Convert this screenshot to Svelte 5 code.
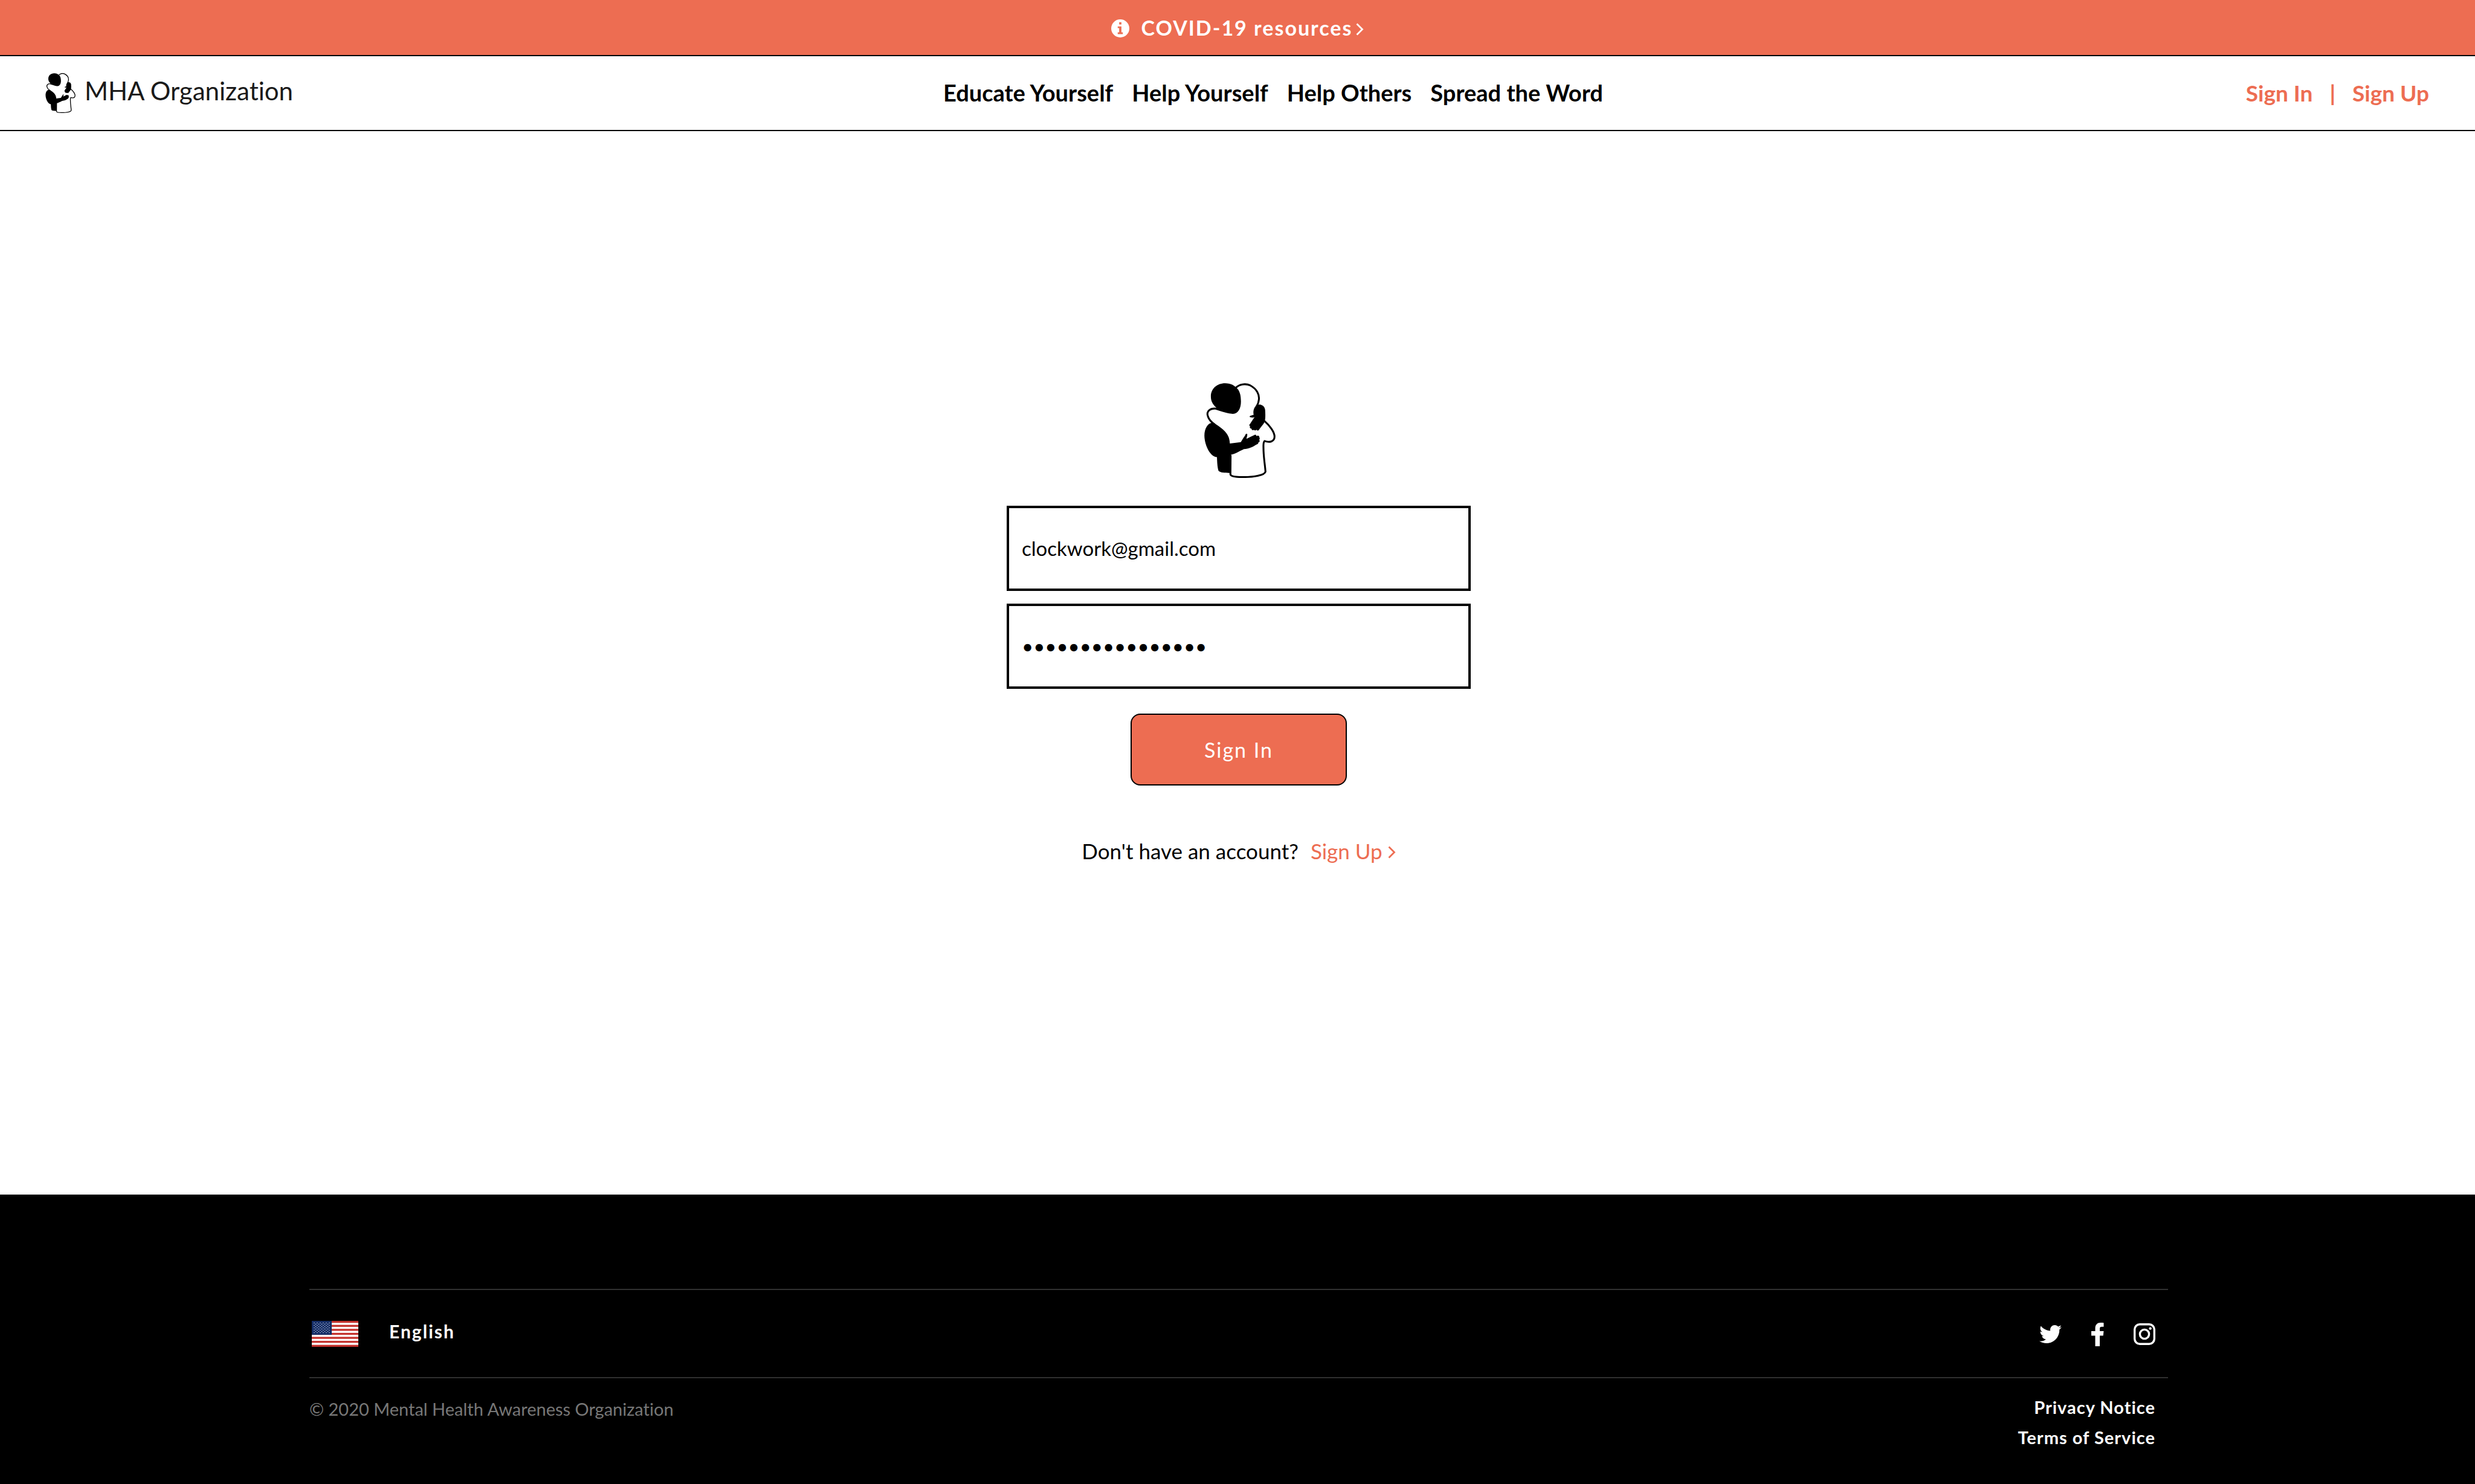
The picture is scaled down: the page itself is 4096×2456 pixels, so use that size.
<script>
  const navLinks = ['Educate Yourself', 'Help Yourself', 'Help Others', 'Spread the Word'];
  const legalLinks = ['Privacy Notice', 'Terms of Service'];
  const stripes = [0, 2, 4, 6, 8, 10, 12];
  const stars = [];
  for (let row = 0; row < 9; row++) {
    const count = row % 2 ? 5 : 6;
    for (let i = 0; i < count; i++) {
      stars.push({ x: (row % 2 ? 6.5 : 4) + i * 5, y: 3.5 + row * 2 });
    }
  }
  let email = $state('clockwork@gmail.com');
  let password = $state('mentalhealth2020');
</script>

{#snippet hug()}
  <svg class="hug" viewBox="76 60 395 514" aria-hidden="true">
    <g fill="none" stroke="currentColor" stroke-width="10" stroke-linejoin="round">
      <path d="M255 86C275 66 308 60 335 73C370 92 385 122 381 150C380 165 375 176 368 188" />
      <path d="M410 264C440 290 466 325 466 350C466 377 440 384 412 374C404 380 406 395 406 410C406 460 414 500 417 540C412 560 350 570 290 569C255 569 230 565 227 555L228 450" />
      <path d="M155 199C115 193 95 215 105 240C110 257 125 272 140 283" />
    </g>
    <g fill="currentColor">
      <path d="M150 193C128 172 121 155 121 132C121 90 155 61 198 61C225 61 243 70 257 83C277 98 284 125 284 160C284 195 270 227 240 227C220 227 180 215 148 204Z" />
      <path d="M372 178C385 172 412 178 415 205C417 235 417 255 412 270C405 285 390 300 380 315C375 320 368 316 370 311C365 320 355 316 354 313C348 318 340 313 342 307C333 308 330 298 334 294C328 292 328 285 333 282C340 270 350 255 358 245C345 248 333 247 331 242C331 236 345 235 353 232C349 215 352 190 372 178Z" />
      <path d="M125 276L138 275C170 298 206 320 218 355C222 368 223 378 224 387L283 380C290 370 298 355 306 345C308 337 314 331 318 337C320 345 314 355 314 362C330 355 345 347 358 341C364 338 369 343 366 347C374 343 385 345 383 352C388 358 385 366 383 366C388 374 384 382 378 381C380 388 374 392 368 393C350 405 325 417 300 418C275 430 250 445 229 449L228 547C200 546 175 548 162 535C155 510 155 480 154 461C120 462 87 400 86 345C86 305 105 278 125 276Z" />
    </g>
  </svg>
{/snippet}

{#snippet chevron()}
  <svg class="chevron" viewBox="0 0 13 21" aria-hidden="true">
    <path d="M1.500 1.500L10.500 10.500L1.500 19.500" fill="none" stroke="currentColor" stroke-width="2.800" />
  </svg>
{/snippet}

<div class="page">
  <a class="banner" href="#covid">
    <svg class="info" viewBox="0 0 32 32" aria-hidden="true">
      <path fill="currentColor" fill-rule="evenodd" d="M16 0a16 16 0 1 1 0 32a16 16 0 0 1 0-32zM14 5h4v4h-4zM11.500 12.500h6.500v10.500h2.500v3h-9v-3h2.500v-7.500h-2.500z" />
    </svg>
    <span class="banner-text">COVID-19 resources</span>
    {@render chevron()}
  </a>

  <header class="bar">
    <a class="brand" href="#home">
      {@render hug()}
      <span class="brand-name">MHA Organization</span>
    </a>
    <nav class="links" aria-label="Main">
      {#each navLinks as label}
        <a href="#nav">{label}</a>
      {/each}
    </nav>
    <div class="account">
      <a href="#signin">Sign In</a>
      <span>|</span>
      <a href="#signup">Sign Up</a>
    </div>
  </header>

  <main>
    {@render hug()}
    <form onsubmit={(e) => e.preventDefault()}>
      <input type="email" aria-label="Email" autocomplete="off" bind:value={email} />
      <input type="password" aria-label="Password" autocomplete="off" bind:value={password} />
      <button type="submit">Sign In</button>
    </form>
    <p class="prompt">
      <span>Don't have an account?</span>
      <a href="#signup">Sign Up {@render chevron()}</a>
    </p>
  </main>

  <footer>
    <div class="row locale-row">
      <a class="locale" href="#language">
        <svg class="flag" viewBox="0 0 77 43" preserveAspectRatio="none" aria-hidden="true">
          <rect width="77" height="43" fill="#fff" />
          {#each stripes as n}
            <rect y={(n * 43) / 13} width="77" height={43 / 13} fill="#c4322d" />
          {/each}
          <rect width="33" height={(43 * 7) / 13} fill="#142d66" />
          {#each stars as s}
            <circle cx={s.x} cy={s.y} r="0.7" fill="#d5dbe8" />
          {/each}
        </svg>
        <span class="language">English</span>
      </a>
      <div class="social">
        <a href="#twitter" aria-label="Twitter">
          <svg class="twitter" viewBox="0 48 512 416" aria-hidden="true">
            <path fill="currentColor" d="M459.37 151.716c.325 4.548.325 9.097.325 13.645 0 138.72-105.583 298.558-298.558 298.558-59.452 0-114.68-17.219-161.137-47.106 8.447.974 16.568 1.299 25.34 1.299 49.055 0 94.213-16.568 130.274-44.832-46.132-.975-84.792-31.188-98.112-72.772 6.498.974 12.995 1.624 19.818 1.624 9.421 0 18.843-1.3 27.614-3.573-48.081-9.747-84.143-51.98-84.143-102.985v-1.299c13.969 7.797 30.214 12.67 47.431 13.319-28.264-18.843-46.781-51.005-46.781-87.391 0-19.492 5.197-37.36 14.294-52.954 51.655 63.675 129.3 105.258 216.365 109.807-1.624-7.797-2.599-15.918-2.599-24.04 0-57.828 46.782-104.934 104.934-104.934 30.213 0 57.502 12.67 76.67 33.137 23.715-4.548 46.456-13.32 66.599-25.34-7.798 24.366-24.366 44.833-46.132 57.827 21.117-2.273 41.584-8.122 60.426-16.243-14.292 20.791-32.161 39.308-52.628 54.253z" />
          </svg>
        </a>
        <a href="#facebook" aria-label="Facebook">
          <svg class="facebook" viewBox="0 0 21 39" aria-hidden="true">
            <path fill="currentColor" d="M20.500.200V6.800H17.500C14.900 6.800 14 7.900 14 10V14H20.500L19.700 21.500H14V39H6.500V21.500H0V14H6.500V9.200C6.500 3.300 10.100 0 15.500 0C17.900 0 19.800.100 20.500.200Z" />
          </svg>
        </a>
        <a href="#instagram" aria-label="Instagram">
          <svg class="instagram" viewBox="0 0 36 36" aria-hidden="true">
            <rect x="1.700" y="1.700" width="32.600" height="32.600" rx="8.500" fill="none" stroke="currentColor" stroke-width="3.400" />
            <circle cx="18" cy="18" r="7.600" fill="none" stroke="currentColor" stroke-width="3.400" />
            <circle cx="27.600" cy="8.600" r="2.200" fill="currentColor" />
          </svg>
        </a>
      </div>
    </div>
    <div class="row legal-row">
      <p class="copyright">© 2020 Mental Health Awareness Organization</p>
      <div class="legal">
        {#each legalLinks as label}
          <a href="#legal">{label}</a>
        {/each}
      </div>
    </div>
  </footer>
</div>

<style>
  :global(body) {
    margin: 0;
    background: #fff;
  }
  .page {
    --accent: #ed6d52;
    min-height: 100vh;
    display: flex;
    flex-direction: column;
    font-family: Lato, "Liberation Sans", sans-serif;
    font-variant-ligatures: none;
    color: #000;
  }
  a {
    color: inherit;
    text-decoration: none;
  }
  p {
    margin: 0;
  }
  svg {
    display: block;
    flex: none;
  }
  .chevron {
    width: 13px;
    height: 21px;
    margin-top: 5px;
  }

  .banner {
    display: flex;
    align-items: center;
    justify-content: center;
    height: 91px;
    border-bottom: 2px solid #000;
    background: var(--accent);
    color: #fff;
    font-size: 34px;
    font-weight: 700;
    letter-spacing: 2px;
  }
  .info {
    width: 30px;
    height: 30px;
    margin-top: 3px;
  }
  .banner-text {
    padding: 0 6px 0 20px;
  }

  .bar {
    display: flex;
    align-items: center;
    justify-content: space-between;
    height: 122px;
    padding: 0 76px 0 74px;
    border-bottom: 2px solid #000;
  }
  .brand {
    display: flex;
    align-items: center;
    gap: 15px;
    padding-right: 12px;
    color: #1a1a1a;
    font-size: 42px;
  }
  .brand .hug {
    width: 51px;
    height: 66px;
    color: #000;
  }
  .brand-name {
    padding-bottom: 8px;
  }
  .links,
  .account {
    display: flex;
    padding-bottom: 2px;
    font-weight: 700;
  }
  .links {
    gap: 31px;
    font-size: 38px;
  }
  .account {
    gap: 28px;
    color: var(--accent);
    font-size: 37px;
  }

  main {
    flex: 1;
    display: flex;
    flex-direction: column;
    align-items: center;
    padding: 417px 0 80px 4px;
  }
  main > .hug {
    width: 121px;
    height: 157px;
  }
  form {
    display: flex;
    flex-direction: column;
    align-items: center;
    width: 768px;
    max-width: 100%;
    margin-top: 46px;
  }
  input {
    box-sizing: border-box;
    width: 100%;
    height: 141px;
    margin: 0 0 21px;
    padding: 0 21px 2px;
    border: 4px solid #000;
    border-radius: 0;
    background: #fff;
    color: #000;
    font: 33px Lato, "Liberation Sans", sans-serif;
    outline: none;
  }
  button {
    width: 358px;
    height: 119px;
    margin: 20px 0 0;
    padding: 0;
    border: 2px solid #000;
    border-radius: 16px;
    background: var(--accent);
    color: #fff;
    font: 34px Lato, "Liberation Sans", sans-serif;
    letter-spacing: 2px;
  }
  .prompt {
    display: flex;
    gap: 20px;
    margin-top: 87px;
    font-size: 35px;
    line-height: 42px;
  }
  .prompt a {
    display: flex;
    align-items: center;
    gap: 9px;
    color: var(--accent);
  }

  footer {
    padding: 156px 508px 52px 512px;
    background: #000;
    color: #fff;
  }
  .row {
    display: flex;
    justify-content: space-between;
    border-top: 2px solid #303030;
    padding-right: 21px;
  }
  .locale-row {
    align-items: center;
    height: 144px;
    padding-left: 4px;
  }
  .locale {
    display: flex;
    align-items: center;
    gap: 51px;
  }
  .flag {
    width: 77px;
    height: 43px;
  }
  .language {
    padding-bottom: 8px;
    font-size: 30px;
    font-weight: 700;
    letter-spacing: 2px;
  }
  .social {
    display: flex;
    align-items: center;
    gap: 49px;
    padding-top: 2px;
  }
  .twitter {
    width: 37px;
    height: 30px;
  }
  .facebook {
    width: 21px;
    height: 39px;
  }
  .instagram {
    width: 36px;
    height: 36px;
  }
  .legal-row {
    padding-top: 23px;
  }
  .copyright {
    color: #777;
    font-size: 29px;
    line-height: 56px;
  }
  .legal {
    display: flex;
    flex-direction: column;
    align-items: flex-end;
    font-size: 29px;
    font-weight: 700;
    line-height: 50px;
    letter-spacing: 1px;
  }
</style>
